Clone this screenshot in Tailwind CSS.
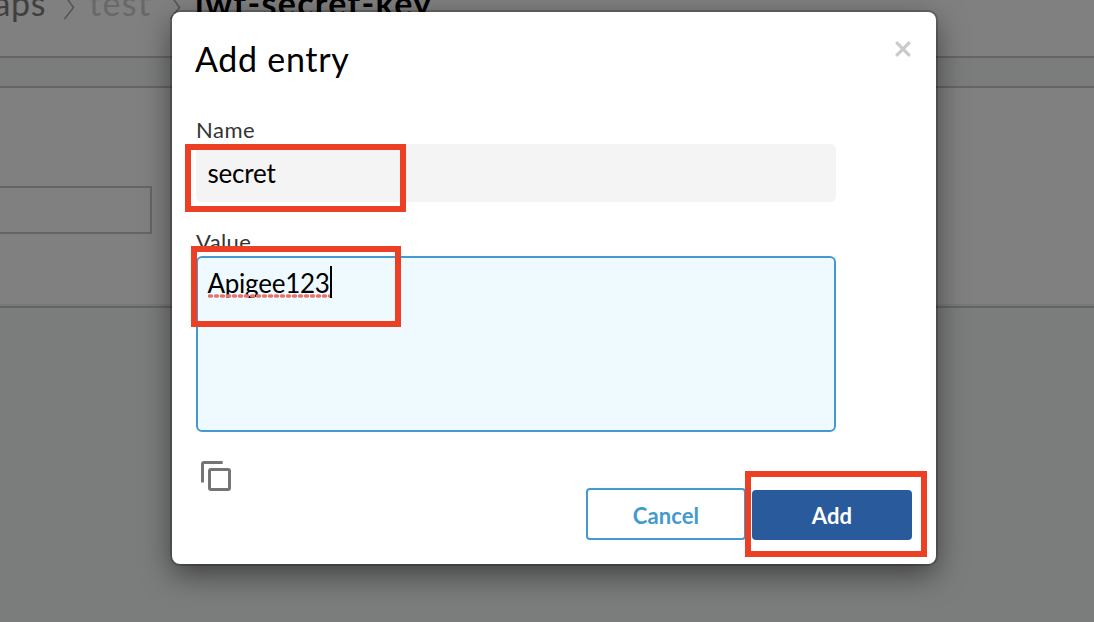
<!DOCTYPE html>
<html lang="en">
<head>
<meta charset="utf-8">
<title>Add entry</title>
<script src="https://cdn.jsdelivr.net/npm/@tailwindcss/browser@4"></script>
</head>
<body class="relative h-[622px] w-[1094px] overflow-hidden bg-[#7b7d7c] font-['Lato',sans-serif]">
  <div class="flex h-full flex-col">
    <header class="flex h-[58px] shrink-0 items-start border-b-2 border-[#656565] bg-[#808080] text-[34px] leading-[40px] whitespace-nowrap">
      <span class="-mt-[17px] flex w-[46px] shrink-0 justify-end tracking-[0.6px] text-[#3f3f3f]">maps</span>
      <svg class="ml-[17px] -mt-[6px] h-[26px] w-[13px] shrink-0" viewBox="0 0 13 26" fill="none" stroke="#545454" stroke-width="1.5"><path d="M1.5 1L10.5 13.5L1.5 25"/></svg>
      <span class="ml-[13px] -mt-[17px] w-[62px] shrink-0 tracking-[1.4px] text-[#686868]">test</span>
      <svg class="ml-[18px] -mt-[6px] h-[26px] w-[13px] shrink-0" viewBox="0 0 13 26" fill="none" stroke="#545454" stroke-width="1.5"><path d="M1.5 1L10.5 13.5L1.5 25"/></svg>
      <span class="ml-[13px] -mt-[17px] font-bold tracking-[1.3px] text-black">jwt-secret-key</span>
    </header>
    <div class="h-[28px] shrink-0 bg-[#7b7d7c]"></div>
    <section class="h-[222px] shrink-0 border-y-2 border-[#656565] bg-[#808080] pt-[98px] shadow-[inset_0_-2px_0_#787878]">
      <div class="h-[48px] w-[152px] border-2 border-l-0 border-[#656565]"></div>
    </section>
  </div>

  <div class="absolute top-[12px] left-[172px] flex h-[552px] w-[764px] flex-col rounded-[8px] bg-white px-[24px] shadow-[0_0_0_2px_rgba(0,0,0,0.2),0_10px_30px_rgba(0,0,0,0.5)]">
    <div class="flex h-[104px] justify-between">
      <h1 class="mt-[26px] -ml-px text-[34px] leading-[42px] tracking-[0.7px] text-black">Add entry</h1>
      <svg class="mt-[29px] mr-[1px] size-[16px]" viewBox="0 0 16 16" stroke="#cacaca" stroke-width="3.2"><path d="M1.2 1.2L14.8 14.8M14.8 1.2L1.2 14.8"/></svg>
    </div>
    <label class="h-[28px] text-[22px] leading-[28px] tracking-[0.5px] text-[#333]">Name</label>
    <div class="h-[58px] w-[640px] rounded-[6px] bg-[#f4f4f4] px-[11.5px] text-[26px] leading-[58px] tracking-[-0.2px] text-black">secret</div>
    <label class="mt-[26px] h-[28px] text-[22px] leading-[28px] tracking-[0.4px] text-[#333]">Value</label>
    <div class="flex h-[176px] w-[640px] items-start rounded-[6px] border-2 border-[#4499cf] bg-[#eefaff] pt-[8px] pl-[9.5px] text-[26px] leading-[34px] text-black">
      <span class="relative tracking-[-0.25px]">Apigee123<svg class="absolute top-[27.5px] left-0 h-[4px] w-[122px]"><line x1="1.5" y1="2" x2="122" y2="2" stroke="#e8736b" stroke-width="3.4" stroke-linecap="round" stroke-dasharray="2 4"/></svg></span>
      <span class="h-[32px] w-[2px] bg-black"></span>
    </div>
    <svg class="mt-[28px] ml-[4px] h-[32px] w-[32px]" viewBox="0 0 32 32" fill="none" stroke="#757575" stroke-width="3"><path d="M2.5 22.5V4Q2.5 2.5 4 2.5H22.7"/><rect x="9.5" y="9.5" width="20" height="20" rx="1.5"/></svg>
    <div class="-mt-[4px] flex justify-end gap-[6px] text-[22px] font-bold">
      <button class="h-[52px] w-[160px] rounded-[4px] border-2 border-[#4499cf] pt-[2px] tracking-[0.1px] text-[#4499cf]">Cancel</button>
      <button class="mt-[2px] h-[50px] w-[160px] rounded-[4px] bg-[#295a9b] tracking-[0.2px] text-white">Add</button>
    </div>
  </div>

  <div class="absolute top-[144px] left-[185px] h-[68px] w-[221px] border-[6px] border-[#ec4026]"></div>
  <div class="absolute top-[246px] left-[191px] h-[81px] w-[210px] border-[6px] border-[#ec4026]"></div>
  <div class="absolute top-[471px] left-[745px] h-[86px] w-[182px] border-[6px] border-[#ec4026]"></div>
</body>
</html>
